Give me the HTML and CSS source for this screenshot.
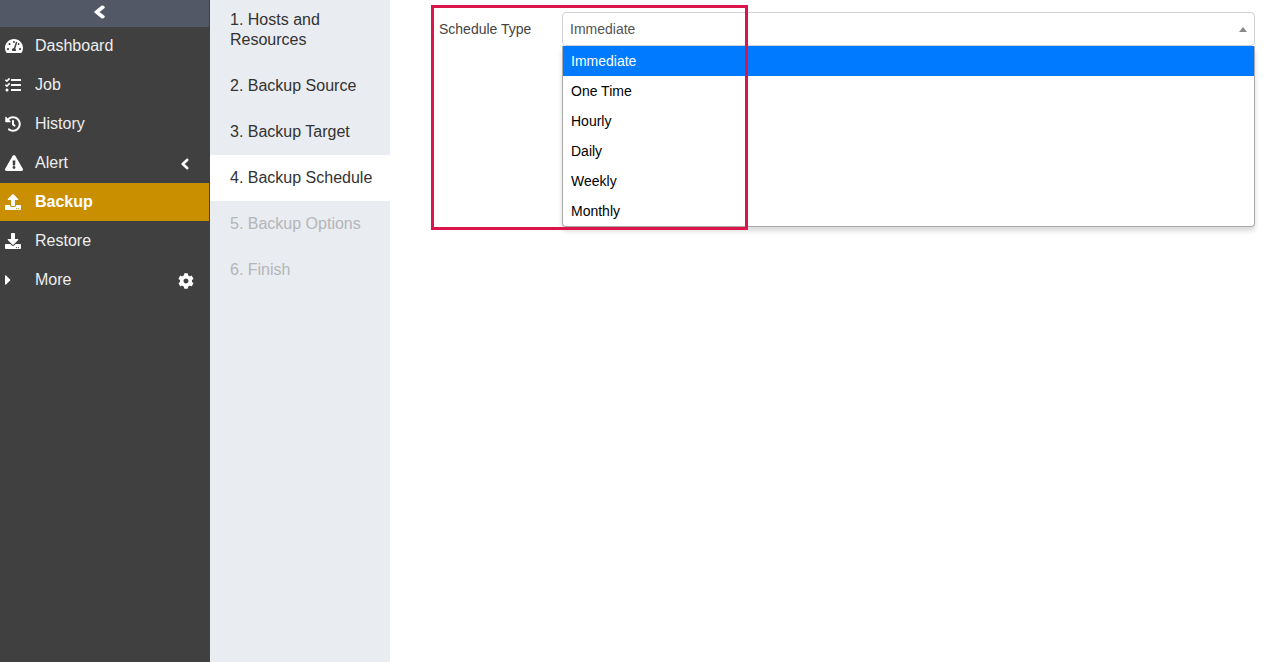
FILE: index.html
```
<!DOCTYPE html>
<html lang="en">
<head>
<meta charset="utf-8">
<title>Backup Schedule</title>
<link rel="stylesheet" href="styles.css">
</head>
<body>
<div class="app">
  <nav class="sidebar">
    <div class="collapse"><svg class="chev" viewBox="0 0 320 512" preserveAspectRatio="none"><path d="M34.52 239.03L228.87 44.69c9.37-9.37 24.57-9.37 33.94 0l22.67 22.67c9.36 9.36 9.37 24.52.04 33.9L131.49 256l154.02 154.75c9.34 9.38 9.32 24.54-.04 33.9l-22.67 22.67c-9.37 9.37-24.57 9.37-33.94 0L34.52 272.97c-9.37-9.37-9.37-24.57 0-33.94z"/></svg></div>
    <a class="item"><span class="ico"><svg viewBox="0 0 576 512"><path d="M288 32C128.94 32 0 160.94 0 320c0 52.8 14.25 102.26 39.06 144.8 5.61 9.62 16.3 15.2 27.44 15.2h443c11.14 0 21.83-5.58 27.44-15.2C561.75 422.26 576 372.8 576 320c0-159.06-128.94-288-288-288zm0 64c14.71 0 26.58 10.13 30.32 23.65-1.11 2.26-2.64 4.23-3.45 6.67l-9.22 27.67c-5.13 3.49-10.97 6.01-17.64 6.01-17.67 0-32-14.33-32-32S270.33 96 288 96zM96 384c-17.67 0-32-14.33-32-32s14.33-32 32-32 32 14.33 32 32-14.33 32-32 32zm48-160c-17.67 0-32-14.33-32-32s14.33-32 32-32 32 14.33 32 32-14.33 32-32 32zm246.77-72.41l-61.33 184C343.13 347.33 352 364.54 352 384c0 11.72-3.38 22.55-8.88 32H232.88c-5.5-9.45-8.88-20.28-8.88-32 0-33.94 26.5-61.43 59.9-63.59l61.34-184.01c4.17-12.56 17.73-19.45 30.36-15.17 12.57 4.19 19.35 17.79 15.17 30.36zm14.66 57.2l15.52-46.55c3.47-1.29 7.13-2.23 11.05-2.23 17.67 0 32 14.33 32 32s-14.33 32-32 32c-11.38-.01-20.89-6.28-26.57-15.22zM480 384c-17.67 0-32-14.33-32-32s14.33-32 32-32 32 14.33 32 32-14.33 32-32 32z"/></svg></span><span class="label">Dashboard</span></a>
    <a class="item"><span class="ico"><svg viewBox="0 0 512 512"><path d="M139.61 35.5a12 12 0 0 0-17 0L58.93 98.81l-22.7-22.12a12 12 0 0 0-17 0L3.53 92.41a12 12 0 0 0 0 17l47.59 47.4a12.78 12.78 0 0 0 17.61 0l15.59-15.62L156.52 69a12.09 12.09 0 0 0 .09-17zm0 159.19a12 12 0 0 0-17 0l-63.68 63.72-22.7-22.1a12 12 0 0 0-17 0L3.53 252a12 12 0 0 0 0 17L51 316.5a12.77 12.77 0 0 0 17.6 0l15.7-15.69 72.2-72.22a12 12 0 0 0 .09-16.9zM64 368c-26.49 0-48.59 21.5-48.59 48S37.53 464 64 464a48 48 0 0 0 0-96zm432 16H208a16 16 0 0 0-16 16v32a16 16 0 0 0 16 16h288a16 16 0 0 0 16-16v-32a16 16 0 0 0-16-16zm0-320H208a16 16 0 0 0-16 16v32a16 16 0 0 0 16 16h288a16 16 0 0 0 16-16V80a16 16 0 0 0-16-16zm0 160H208a16 16 0 0 0-16 16v32a16 16 0 0 0 16 16h288a16 16 0 0 0 16-16v-32a16 16 0 0 0-16-16z"/></svg></span><span class="label">Job</span></a>
    <a class="item"><span class="ico"><svg viewBox="0 0 512 512"><path d="M504 255.531c.253 136.64-111.18 248.372-247.82 248.468-59.015.042-113.223-20.53-155.822-54.911-11.077-8.94-11.905-25.541-1.839-35.607l11.267-11.267c8.609-8.609 22.353-9.551 31.891-1.984C173.062 425.135 212.781 440 256 440c101.705 0 184-82.311 184-184 0-101.705-82.311-184-184-184-48.814 0-93.149 18.969-126.068 49.932l50.754 50.754c10.08 10.08 2.941 27.314-11.313 27.314H24c-8.837 0-16-7.163-16-16V38.627c0-14.254 17.234-21.393 27.314-11.314l49.372 49.372C129.209 34.136 189.552 8 256 8c136.81 0 247.747 110.78 248 247.531zm-180.912 78.784l9.823-12.63c8.138-10.463 6.253-25.542-4.21-33.679L288 256.349V152c0-13.255-10.745-24-24-24h-16c-13.255 0-24 10.745-24 24v135.651l65.409 50.874c10.463 8.137 25.541 6.253 33.679-4.21z"/></svg></span><span class="label">History</span></a>
    <a class="item"><span class="ico"><svg viewBox="0 0 576 512"><path d="M569.517 440.013C587.975 472.007 564.806 512 527.94 512H48.054c-36.937 0-59.999-40.055-41.577-71.987L246.423 23.985c18.467-32.009 64.72-31.951 83.154 0l239.94 416.028zM288 354c-25.405 0-46 20.595-46 46s20.595 46 46 46 46-20.595 46-46-20.595-46-46-46zm-43.673-165.346l7.418 136c.347 6.364 5.609 11.346 11.982 11.346h48.546c6.373 0 11.635-4.982 11.982-11.346l7.418-136c.375-6.874-5.098-12.654-11.982-12.654h-63.383c-6.884 0-12.356 5.78-11.981 12.654z"/></svg></span><span class="label">Alert</span><span class="end"><svg class="chev-small" viewBox="0 0 320 512" preserveAspectRatio="none"><path d="M34.52 239.03L228.87 44.69c9.37-9.37 24.57-9.37 33.94 0l22.67 22.67c9.36 9.36 9.37 24.52.04 33.9L131.49 256l154.02 154.75c9.34 9.38 9.32 24.54-.04 33.9l-22.67 22.67c-9.37 9.37-24.57 9.37-33.94 0L34.52 272.97c-9.37-9.37-9.37-24.57 0-33.94z"/></svg></span></a>
    <a class="item active"><span class="ico"><svg viewBox="0 0 512 512"><path d="M296 384h-80c-13.3 0-24-10.7-24-24V192h-87.7c-17.8 0-26.7-21.5-14.1-34.1L242.3 5.7c7.5-7.5 19.8-7.5 27.3 0l152.2 152.2c12.6 12.6 3.7 34.1-14.1 34.1H320v168c0 13.3-10.7 24-24 24zm216-8v112c0 13.3-10.7 24-24 24H24c-13.3 0-24-10.7-24-24V376c0-13.3 10.7-24 24-24h136v8c0 30.9 25.1 56 56 56h80c30.9 0 56-25.1 56-56v-8h136c13.3 0 24 10.7 24 24zm-124 88c0-11-9-20-20-20s-20 9-20 20 9 20 20 20 20-9 20-20zm64 0c0-11-9-20-20-20s-20 9-20 20 9 20 20 20 20-9 20-20z"/></svg></span><span class="label">Backup</span></a>
    <a class="item"><span class="ico"><svg viewBox="0 0 512 512"><path d="M216 0h80c13.3 0 24 10.7 24 24v168h87.7c17.8 0 26.7 21.5 14.1 34.1L269.7 378.3c-7.5 7.5-19.8 7.5-27.3 0L90.1 226.1c-12.6-12.6-3.7-34.1 14.1-34.1H192V24c0-13.3 10.7-24 24-24zm296 376v112c0 13.3-10.7 24-24 24H24c-13.3 0-24-10.7-24-24V376c0-13.3 10.7-24 24-24h146.7l49 49c20.1 20.1 52.5 20.1 72.6 0l49-49H488c13.3 0 24 10.7 24 24zm-124 88c0-11-9-20-20-20s-20 9-20 20 9 20 20 20 20-9 20-20zm64 0c0-11-9-20-20-20s-20 9-20 20 9 20 20 20 20-9 20-20z"/></svg></span><span class="label">Restore</span></a>
    <a class="item"><span class="ico"><svg viewBox="0 0 192 512"><path d="M0 384.662V127.338c0-17.818 21.543-26.741 34.142-14.142l128.662 128.662c7.81 7.81 7.81 20.474 0 28.284L34.142 398.804C21.543 411.404 0 402.48 0 384.662z"/></svg></span><span class="label">More</span><span class="end"><svg class="cog" viewBox="0 0 512 512"><path d="M487.4 315.7l-42.6-24.6c4.3-23.2 4.3-47 0-70.2l42.6-24.6c4.9-2.8 7.1-8.6 5.5-14-11.1-35.6-30-67.8-54.7-94.6-3.8-4.1-10-5.1-14.8-2.3L380.8 110c-17.9-15.4-38.5-27.3-60.8-35.1V25.8c0-5.6-3.9-10.5-9.4-11.7-36.7-8.2-74.3-7.8-109.2 0-5.5 1.2-9.4 6.1-9.4 11.7V75c-22.2 7.9-42.8 19.8-60.8 35.1L88.7 85.5c-4.9-2.8-11-1.9-14.8 2.3-24.7 26.7-43.6 58.9-54.7 94.6-1.7 5.4.6 11.2 5.5 14L67.3 221c-4.3 23.2-4.3 47 0 70.2l-42.6 24.6c-4.9 2.8-7.1 8.6-5.5 14 11.1 35.6 30 67.8 54.7 94.6 3.8 4.1 10 5.1 14.8 2.3l42.6-24.6c17.9 15.4 38.5 27.3 60.8 35.1v49.2c0 5.6 3.9 10.5 9.4 11.7 36.7 8.2 74.3 7.8 109.2 0 5.5-1.2 9.4-6.1 9.4-11.7v-49.2c22.2-7.9 42.8-19.8 60.8-35.1l42.6 24.6c4.9 2.8 11 1.9 14.8-2.3 24.7-26.7 43.6-58.9 54.7-94.6 1.5-5.5-.7-11.3-5.6-14.1zM256 336c-44.1 0-80-35.9-80-80s35.9-80 80-80 80 35.9 80 80-35.9 80-80 80z"/></svg></span></a>
  </nav>
  <ol class="steps">
    <li class="step">1. Hosts and Resources</li>
    <li class="step">2. Backup Source</li>
    <li class="step">3. Backup Target</li>
    <li class="step current">4. Backup Schedule</li>
    <li class="step disabled">5. Backup Options</li>
    <li class="step disabled">6. Finish</li>
  </ol>
  <main class="content">
    <div class="field">
      <label class="field-label">Schedule Type</label>
      <div class="select">
        <div class="select-value"><span>Immediate</span><i class="arrow"></i></div>
        <ul class="options">
          <li class="option selected">Immediate</li>
          <li class="option">One Time</li>
          <li class="option">Hourly</li>
          <li class="option">Daily</li>
          <li class="option">Weekly</li>
          <li class="option">Monthly</li>
        </ul>
      </div>
    </div>
    <div class="highlight"></div>
  </main>
</div>
</body>
</html>
```
FILE: styles.css
```
* { box-sizing: border-box; }
html, body { margin: 0; padding: 0; height: 100%; overflow: hidden; }
body { font-family: "Liberation Sans", Arial, sans-serif; background: #fff; color: #333; }
.app { display: flex; height: 662px; }

.sidebar { width: 210px; flex: none; background: #404040; padding-right: 1px; }
.collapse { height: 27px; background: #525866; display: flex; align-items: center; justify-content: center; padding: 0 10px 3px 0; }
.chev { width: 11px; height: 14px; fill: #fff; stroke: #fff; stroke-width: 40; display: block; }
.item { display: flex; align-items: center; height: 38px; margin-bottom: 1px; padding-left: 5px; color: #eee; font-size: 16px; }
.ico { width: 30px; flex: none; display: flex; align-items: center; }
.ico svg { height: 16px; display: block; fill: #fff; }
.label { flex: 1; }
.end { width: 31px; flex: none; display: flex; align-items: center; padding-top: 2px; }
.chev-small { width: 8px; height: 12px; fill: #fff; stroke: #fff; stroke-width: 40; display: block; margin-left: 3px; }
.cog { width: 16px; height: 16px; fill: #fff; display: block; }
.active { background: #c98f00; color: #fff; font-weight: 700; }

.steps { width: 180px; flex: none; background: #e9ecf0; margin: 0; padding: 0; list-style: none; font-size: 16px; line-height: 20px; color: #333; height: 662px; overflow: hidden; }
.step { padding: 13px 10px 13px 20px; }
.step:first-child { margin-top: -3px; }
.current { background: #fff; }
.disabled { color: #b4b6b9; }

.content { flex: 1; position: relative; padding: 12px 12px 0 41px; }
.field { display: flex; }
.field-label { width: 131px; flex: none; padding: 9px 0 0 8px; font-size: 14px; line-height: 16px; color: #444; }
.select { flex: 1; position: relative; font-size: 14px; }
.select-value { height: 34px; border: 1px solid #d0d0d6; border-radius: 4px; padding-left: 7px; line-height: 33px; color: #555; display: flex; justify-content: space-between; align-items: center; }
.arrow { width: 0; height: 0; border-left: 4px solid transparent; border-right: 4px solid transparent; border-bottom: 5px solid #888; margin-right: 7px; }
.options { margin: 0; padding: 0; list-style: none; border: 1px solid #aaa; border-top: 0; border-radius: 0 0 4px 4px; box-shadow: 0 4px 5px rgba(0, 0, 0, .15); background: #fff; color: #000; line-height: 30px; }
.option { height: 30px; padding-left: 8px; }
.selected { background: #007bff; color: #fff; }

.highlight { position: absolute; left: 41px; top: 5px; width: 317px; height: 225px; border: 3px solid #dc144c; pointer-events: none; }
```
